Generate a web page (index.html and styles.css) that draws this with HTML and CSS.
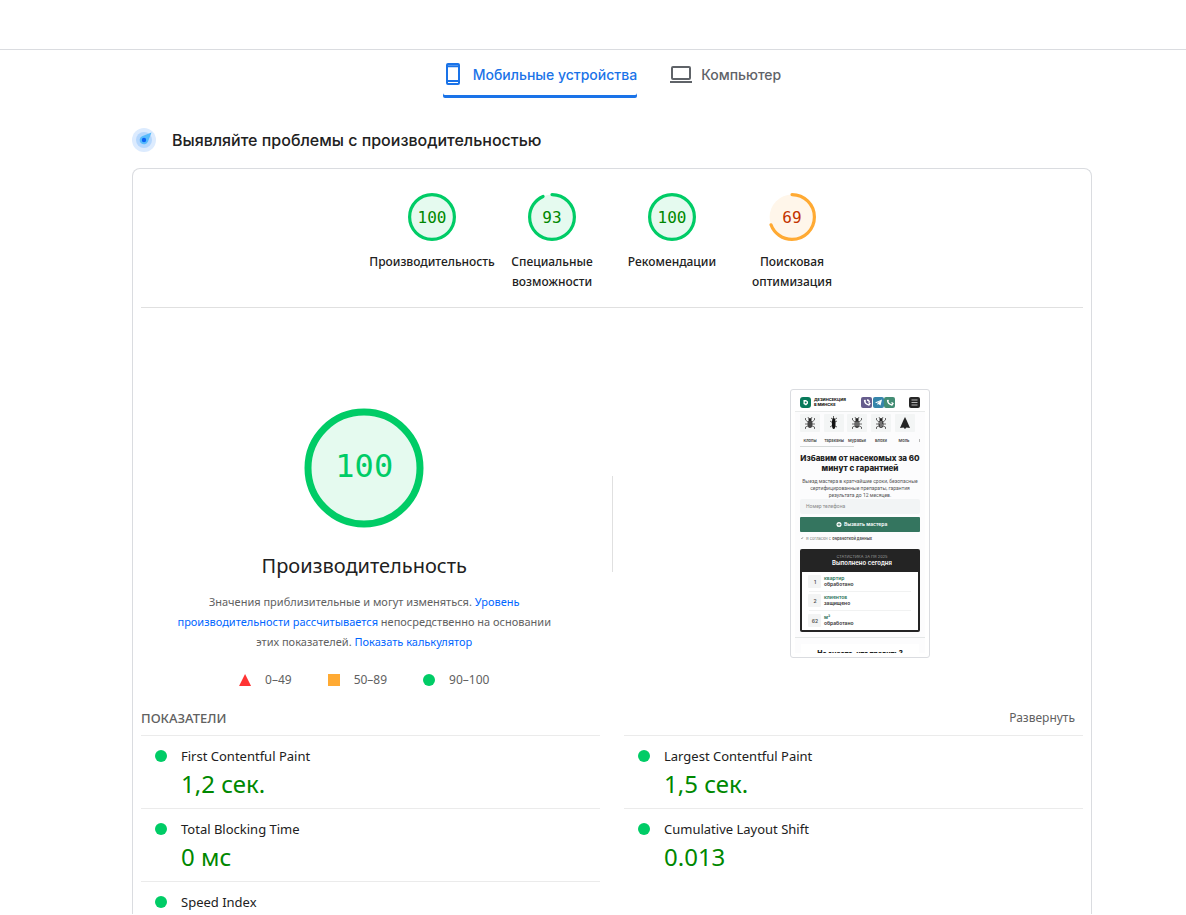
FILE: index.html
```html
<!DOCTYPE html>
<html lang="ru">
<head>
    <meta charset="UTF-8">
    <meta name="viewport" content="width=device-width, initial-scale=1.0">
    <title>PageSpeed Insights</title>
    <link rel="stylesheet" href="styles.css">
</head>
<body>
<header class="topbar"></header>
<main class="page">
    <nav class="tabs">
        <button class="tab active" type="button">
            <svg class="tab-icon" viewBox="2 2 20 20" fill="none" stroke="currentColor" stroke-width="2">
                <rect x="6" y="2" width="12" height="20" rx="1"/>
                <path d="M6 4.300h12M6 19h12"/>
            </svg>
            Мобильные устройства
        </button>
        <button class="tab" type="button">
            <svg class="tab-icon" viewBox="2 2 20 20" fill="none" stroke="currentColor" stroke-width="2">
                <rect x="3" y="5" width="18" height="12" rx="1"/>
                <path d="M1 20h22"/>
            </svg>
            Компьютер
        </button>
    </nav>

    <div class="section-title">
        <svg width="24" height="24" viewBox="0 0 24 24">
            <circle cx="12" cy="12" r="12" fill="#dcebfe"/>
            <circle cx="12" cy="12" r="8" fill="#b5d7fd"/>
            <path d="M19.500 4.500 16 13.500A4.300 4.300 0 1 1 10 8.200Z" fill="#57bbfb"/>
            <circle cx="12" cy="12" r="2.200" fill="#0b62f5"/>
        </svg>
        <h1>Выявляйте проблемы с производительностью</h1>
    </div>

    <section class="card">
        <div class="gauges">
            <a class="gauge pass" href="#performance">
                <span class="gauge-ring">
                    <svg viewBox="0 0 120 120"><circle class="base" cx="60" cy="60" r="56"/><circle class="arc" cx="60" cy="60" r="56"/></svg>
                    <span class="score">100</span>
                </span>
                <span class="gauge-label">Производительность</span>
            </a>
            <a class="gauge pass" href="#accessibility">
                <span class="gauge-ring">
                    <svg viewBox="0 0 120 120"><circle class="base" cx="60" cy="60" r="56"/><circle class="arc" cx="60" cy="60" r="56" pathLength="100" stroke-dasharray="93 100"/></svg>
                    <span class="score">93</span>
                </span>
                <span class="gauge-label">Специальные возможности</span>
            </a>
            <a class="gauge pass" href="#best-practices">
                <span class="gauge-ring">
                    <svg viewBox="0 0 120 120"><circle class="base" cx="60" cy="60" r="56"/><circle class="arc" cx="60" cy="60" r="56"/></svg>
                    <span class="score">100</span>
                </span>
                <span class="gauge-label">Рекомендации</span>
            </a>
            <a class="gauge average" href="#seo">
                <span class="gauge-ring">
                    <svg viewBox="0 0 120 120"><circle class="base" cx="60" cy="60" r="56"/><circle class="arc" cx="60" cy="60" r="56" pathLength="100" stroke-dasharray="69 100"/></svg>
                    <span class="score">69</span>
                </span>
                <span class="gauge-label">Поисковая оптимизация</span>
            </a>
        </div>

        <div class="category" id="performance">
            <div class="summary">
                <div class="big-gauge">
                    <svg viewBox="0 0 120 120"><circle cx="60" cy="60" r="56"/></svg>
                    <span class="big-score">100</span>
                </div>
                <h2>Производительность</h2>
                <p class="note">Значения приблизительные и могут изменяться. <a href="#scoring">Уровень производительности рассчитывается</a> непосредственно на основании этих показателей. <a href="#calculator">Показать калькулятор</a></p>
                <div class="scale">
                    <span class="range"><i class="mark triangle"></i>0–49</span>
                    <span class="range"><i class="mark square"></i>50–89</span>
                    <span class="range"><i class="mark circle"></i>90–100</span>
                </div>
            </div>
            <div class="divider"></div>
            <div class="screenshot">
                <svg class="thumb" width="130" height="259" viewBox="0 0 130 259">
                    <defs>
                        <g id="bug" stroke="#333" stroke-width=".7" fill="none">
                            <ellipse cy="1" rx="2.500" ry="4" fill="#444" stroke="none"/>
                            <circle cy="-3.500" r="1.500" fill="#222" stroke="none"/>
                            <path d="M-2-1-4.500-3v-2M2-1l2.500-2v-2M-2 1h-3M2 1h3M-2 3l-2.500 1v2M2 3l2.500 1v2M-1-4l-1-2M1-4l1-2"/>
                        </g>
                    </defs>
                    <rect width="130" height="259" fill="#fcfcfd"/>
                    <rect width="130" height="18" fill="#fff"/>
                    <path d="M0 17.500h130" stroke="#e9ebeb"/>
                    <rect x="5" y="3" width="11" height="11" rx="3" fill="#087a5b"/>
                    <path d="M8.500 6h2.500l2 1.500v2L11 11.500 8.500 10Z" fill="#fff"/>
                    <circle cx="10.700" cy="8.500" r="1" fill="#087a5b"/>
                    <g class="t-logo">
                        <text x="19" y="7">ДЕЗИНСЕКЦИЯ</text>
                        <text x="19" y="12">В МИНСКЕ</text>
                    </g>
                    <rect x="66" y="3" width="11" height="11" rx="2" fill="#665d8d"/>
                    <rect x="78" y="3" width="11" height="11" rx="2" fill="#3685aa"/>
                    <rect x="89" y="3" width="11" height="11" rx="2" fill="#438d74"/>
                    <g fill="none" stroke="#fff" stroke-width="1.300">
                        <path d="M69.500 6q0 4 4.500 5l1-1.500-1.500-1M69.500 6l1.200 1.500M72 6q2 0 2.500 2"/>
                        <path d="M92.500 6q0 4 4.500 5l1-1.500-1.500-1M92.500 6l1.200 1.500"/>
                    </g>
                    <path d="m80 8.500 7-3-1.500 6-2-1.500-1 1v-2l3-2-4 2Z" fill="#fff"/>
                    <rect x="114" y="3" width="11" height="11" rx="2" fill="#262626"/>
                    <path d="M116.500 6h6M116.500 8.500h6M116.500 11h6" stroke="#ddd" stroke-width=".8"/>

                    <g fill="#f3f5f5">
                        <rect x="5" y="20" width="20" height="18" rx="1"/>
                        <rect x="29" y="20" width="20" height="18" rx="1"/>
                        <rect x="52" y="20" width="20" height="18" rx="1"/>
                        <rect x="76" y="20" width="20" height="18" rx="1"/>
                        <rect x="100" y="20" width="20" height="18" rx="1"/>
                    </g>
                    <use href="#bug" x="15" y="29"/>
                    <path d="M38.500 22v2M36 24l3 2 3-2M35 27l3 2 4-2M35 33l3-2 4 2" stroke="#222" stroke-width=".7" fill="none"/>
                    <ellipse cx="38.700" cy="29.500" rx="1.800" ry="5.500" fill="#111"/>
                    <use href="#bug" x="62" y="29"/>
                    <path d="M60 29h4M60 31h4" stroke="#ddd" stroke-width=".5"/>
                    <use href="#bug" x="86" y="29"/>
                    <path d="M86 27v6M84 29h1M87 31h1" stroke="#eee" stroke-width=".6"/>
                    <path d="m110 23 1.500 3 3.500 8-3.500-.5-1.500 1.500-1.500-1.500-3.500.5 3.500-8Z" fill="#252525"/>
                    <g class="t-tiny t-strong" text-anchor="middle">
                        <text x="15" y="48">Клопы</text>
                        <text x="39" y="48">Тараканы</text>
                        <text x="62" y="48">Муравьи</text>
                        <text x="86" y="48">Блохи</text>
                        <text x="109" y="48">Моль</text>
                    </g>
                    <path d="M124.500 45v3" stroke="#888" stroke-width=".6"/>
                    <path d="M5 52.500h54" stroke="#d5d9d9"/>
                    <g class="t-head" text-anchor="middle">
                        <text x="65" y="67">Избавим от насекомых за 60</text>
                        <text x="65" y="77">минут с гарантией</text>
                    </g>
                    <g class="t-body" text-anchor="middle">
                        <text x="65" y="89">Выезд мастера в кратчайшие сроки, безопасные</text>
                        <text x="65" y="96">сертифицированные препараты, гарантия</text>
                        <text x="65" y="103">результата до 12 месяцев.</text>
                    </g>
                    <rect x="5" y="105" width="120" height="15" rx="2" fill="#f2f4f5"/>
                    <text class="t-body t-muted" x="11" y="114">Номер телефона</text>
                    <rect x="5" y="123" width="120" height="15" rx="1" fill="#34755f"/>
                    <circle cx="44" cy="130.500" r="2.500" fill="#fff"/>
                    <path d="M44 129v3M42.500 130.500h3" stroke="#34755f" stroke-width=".7"/>
                    <text class="t-button" x="49" y="132">Вызвать мастера</text>
                    <path d="m6 144 1 1 1-2" stroke="#777" stroke-width=".5" fill="none"/>
                    <text class="t-tiny" x="11" y="146">Я согласен с <tspan class="t-strong">обработкой данных</tspan></text>

                    <rect x="5" y="155" width="120" height="83" rx="2" fill="#242424"/>
                    <rect x="7" y="178" width="116" height="58" fill="#fff"/>
                    <g text-anchor="middle">
                        <text class="t-caps" x="67" y="164">СТАТИСТИКА ЗА ПЯ 2025</text>
                        <text class="t-stat" x="67" y="171">Выполнено сегодня</text>
                    </g>
                    <path d="M14 197.500h102M14 216.500h102" stroke="#f1f2f2"/>
                    <g fill="#f3f4f4">
                        <rect x="13" y="181" width="13" height="13" rx="1"/>
                        <rect x="13" y="200" width="13" height="13" rx="1"/>
                        <rect x="13" y="220" width="13" height="13" rx="1"/>
                    </g>
                    <g class="t-num" text-anchor="middle">
                        <text x="20" y="190">1</text>
                        <text x="20" y="209">2</text>
                        <text x="20" y="229">62</text>
                    </g>
                    <g class="t-item">
                        <text class="t-green" x="29" y="186">квартир</text>
                        <text x="29" y="192">обработано</text>
                        <text class="t-green" x="29" y="205">клиентов</text>
                        <text x="29" y="211">защищено</text>
                        <text class="t-green" x="29" y="225">м²</text>
                        <text x="29" y="231">обработано</text>
                    </g>
                    <path d="M0 243.500h130" stroke="#e4e7e7"/>
                    <rect x="6" y="250" width="118" height="9" fill="#fff"/>
                    <text class="t-cut" x="65" y="262" text-anchor="middle">Не знаете, что травить?</text>
                </svg>
            </div>
        </div>

        <div class="metrics-head">
            <span class="metrics-title">Показатели</span>
            <button class="expand" type="button">Развернуть</button>
        </div>
        <div class="metrics">
            <div class="metric">
                <i class="mark circle"></i>
                <span class="metric-name">First Contentful Paint</span>
                <span class="metric-value">1,2 сек.</span>
            </div>
            <div class="metric">
                <i class="mark circle"></i>
                <span class="metric-name">Largest Contentful Paint</span>
                <span class="metric-value">1,5 сек.</span>
            </div>
            <div class="metric">
                <i class="mark circle"></i>
                <span class="metric-name">Total Blocking Time</span>
                <span class="metric-value">0 мс</span>
            </div>
            <div class="metric">
                <i class="mark circle"></i>
                <span class="metric-name">Cumulative Layout Shift</span>
                <span class="metric-value">0.013</span>
            </div>
            <div class="metric">
                <i class="mark circle"></i>
                <span class="metric-name">Speed Index</span>
            </div>
        </div>
    </section>
</main>
</body>
</html>
```
FILE: styles.css
```css
* {
    box-sizing: border-box;
}
body {
    margin: 0;
    background: #fff;
    color: #212121;
    font-family: "Noto Sans", "Open Sans", sans-serif;
    font-size: 13px;
    line-height: 20px;
}
button {
    border: 0;
    padding: 0;
    background: none;
    font-family: inherit;
    cursor: pointer;
}
a {
    color: #06f;
    text-decoration: none;
}
.topbar {
    height: 50px;
    border-bottom: 1px solid #dadce0;
}
.page {
    padding: 0 94px 0 132px;
}

/* tabs */
.tabs {
    display: flex;
    justify-content: center;
    gap: 34px;
}
.tab {
    display: flex;
    align-items: center;
    gap: 10px;
    height: 48px;
    color: #5f6368;
    font-family: Inter, sans-serif;
    font-size: 14px;
    font-weight: 500;
    border-radius: 2px;
}
.tab.active {
    color: #1a73e8;
    box-shadow: inset 0 -3px #1a73e8;
}
.tab-icon {
    width: 20px;
    height: 20px;
    overflow: visible;
}
.section-title {
    display: flex;
    align-items: center;
    gap: 16px;
    margin: 28px 0 14px;
    height: 28px;
}
.section-title h1 {
    margin: 0;
    font-family: Inter, sans-serif;
    font-size: 16px;
    font-weight: 500;
}

/* card */
.card {
    border: 1px solid #dadce0;
    border-radius: 8px;
    padding: 0 8px 24px;
}
.gauges {
    display: flex;
    justify-content: center;
    padding: 24px 0 15px;
    border-bottom: 1px solid #e0e0e0;
}
.gauge {
    display: flex;
    flex-direction: column;
    align-items: center;
    gap: 11px;
    width: 120px;
    color: #212121;
}
.gauge-ring {
    display: grid;
    place-items: center;
    width: 48px;
    height: 48px;
}
.gauge-ring svg,
.score {
    grid-area: 1 / 1;
}
.gauge-ring svg {
    width: 48px;
    height: 48px;
    transform: rotate(-90deg);
}
.base {
    stroke: none;
    fill: #e5faef;
}
.arc {
    fill: none;
    stroke: #0c6;
    stroke-width: 8;
    stroke-linecap: round;
}
.average .base {
    fill: #fff6ea;
}
.average .arc {
    stroke: #fa3;
}
.score {
    z-index: 1;
    padding-top: 2px;
    color: #080;
    font-family: "DejaVu Sans Mono", monospace;
    font-size: 16px;
}
.average .score {
    color: #c33300;
}
.gauge-label {
    font-size: 12px;
    font-weight: 500;
    text-align: center;
}

.category {
    display: grid;
    grid-template-columns: 1fr 1px 1fr;
    column-gap: 24px;
    align-items: start;
    padding-top: 81px;
}
.summary {
    display: flex;
    flex-direction: column;
    align-items: center;
    padding: 19px 24px 0;
}
.big-gauge {
    display: grid;
    place-items: center;
    width: 120px;
    height: 120px;
}
.big-gauge svg,
.big-score {
    grid-area: 1 / 1;
}
.big-gauge circle {
    fill: #e5faef;
    stroke: #0c6;
    stroke-width: 7;
}
.big-gauge svg {
    width: 120px;
    height: 120px;
}
.big-score {
    padding-bottom: 4px;
    color: #0c6;
    font-family: "DejaVu Sans Mono", monospace;
    font-size: 32px;
}
.summary h2 {
    margin: 24px 0 12px;
    font-size: 20px;
    font-weight: 400;
    line-height: 28px;
}
.note {
    margin: 0;
    color: #616161;
    font-size: 11px;
    text-align: center;
}
.scale {
    display: flex;
    gap: 36px;
    margin-top: 18px;
    color: #616161;
    font-size: 12px;
}
.range {
    display: flex;
    align-items: center;
    gap: 14px;
}
.mark {
    width: 12px;
    height: 12px;
}
.triangle {
    background: #f33;
    clip-path: polygon(50% 0, 100% 100%, 0 100%);
}
.square {
    background: #fa3;
}
.circle {
    background: #0c6;
    border-radius: 50%;
}
.divider {
    height: 96px;
    margin-top: 87px;
    background: #e0e0e0;
}
.screenshot {
    justify-self: center;
    border: 1px solid #dadce0;
    border-radius: 3px;
    padding: 4px;
}
.thumb {
    display: block;
    font-family: Inter, sans-serif;
}
.t-logo {
    font-size: 4px;
    font-weight: 800;
    fill: #222;
}
.t-tiny {
    font-size: 4px;
    fill: #777;
}
.t-strong {
    font-weight: 600;
    fill: #444;
}
.t-head {
    font-size: 8px;
    font-weight: 800;
    fill: #222;
}
.t-body {
    font-family: Roboto, sans-serif;
    font-size: 5px;
    fill: #555;
}
.t-muted {
    fill: #888;
}
.t-button {
    font-size: 5px;
    font-weight: 600;
    fill: #fff;
}
.t-caps {
    font-size: 4px;
    fill: #999;
}
.t-stat {
    font-size: 6px;
    font-weight: 600;
    fill: #fff;
}
.t-num {
    font-size: 5px;
    font-weight: 600;
    fill: #555;
}
.t-item {
    font-size: 5px;
    font-weight: 600;
    fill: #333;
}
.t-item .t-green {
    fill: #287158;
}
.t-cut {
    font-size: 7px;
    font-weight: 800;
    fill: #222;
}

/* metrics */
.metrics-head {
    display: flex;
    justify-content: space-between;
    align-items: center;
    padding: 18px 8px 7px 0;
    color: #616161;
}
.metrics-title {
    font-weight: 500;
    text-transform: uppercase;
}
.expand {
    color: #616161;
    font-size: 12px;
    line-height: 20px;
}
.metrics {
    display: grid;
    grid-template-columns: 1fr 1fr;
    column-gap: 24px;
}
.metric {
    display: grid;
    grid-template-columns: 12px 1fr;
    grid-template-rows: 24px 32px;
    column-gap: 14px;
    align-items: center;
    padding: 8px 14px;
    border-top: 1px solid #ebebeb;
}
.metric:last-child {
    grid-template-rows: 24px;
    padding-bottom: 0;
}
.metric-value {
    grid-column: 2;
    color: #080;
    font-size: 24px;
    line-height: 32px;
}
.card {
    padding-bottom: 0;
    border-bottom: 0;
    border-radius: 8px 8px 0 0;
}
```
